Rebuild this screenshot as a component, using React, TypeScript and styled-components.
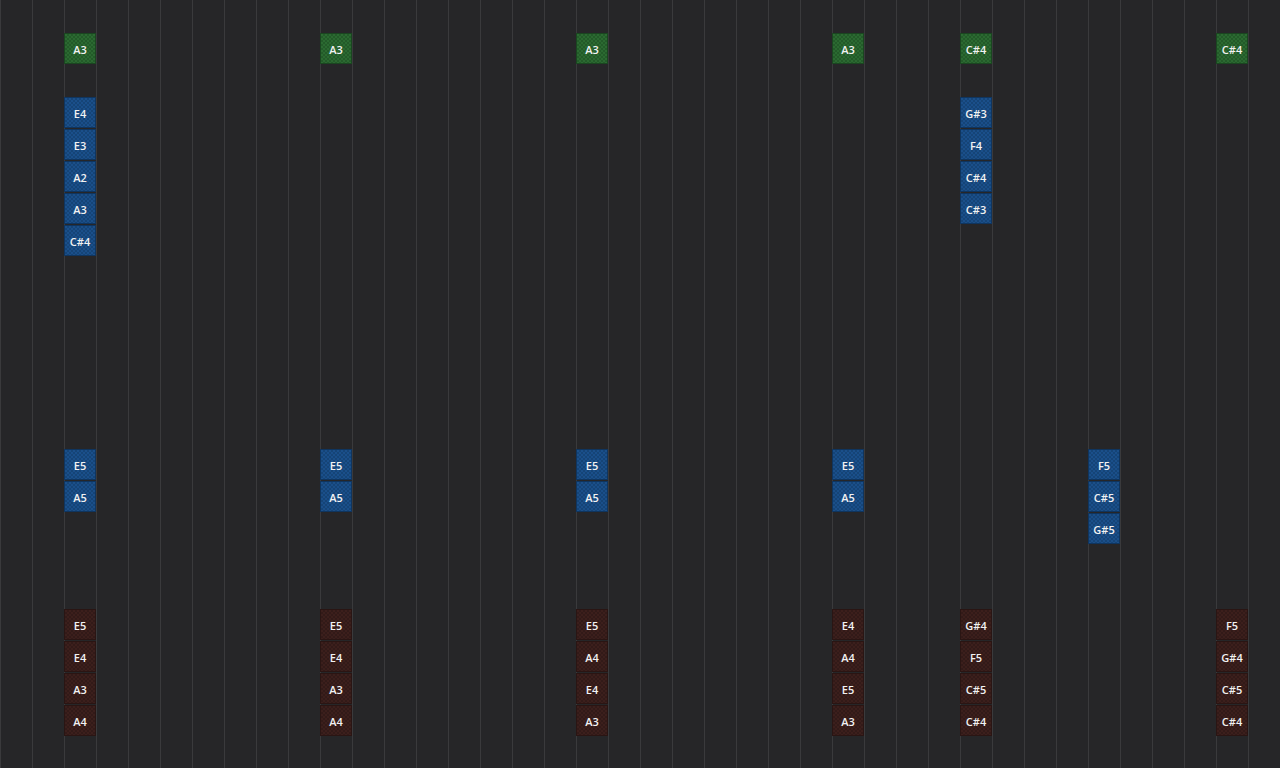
import React from "react";
import styled, { createGlobalStyle } from "styled-components";

const Global = createGlobalStyle`
  html, body { margin: 0; padding: 0; background: #262628; overflow: hidden; }
`;

const Grid = styled.div`
  width: 1280px;
  height: 768px;
  display: grid;
  grid-template-columns: repeat(40, 32px);
  grid-template-rows: repeat(24, 32px);
  background-color: #262628;
  background-image: linear-gradient(to right, #3a3a3c 1px, transparent 1px);
  background-size: 32px 32px;
`;

type Kind = "green" | "blue" | "red";
const colors: Record<Kind, [string, string, string]> = {
  green: ["#2b6a31", "#235a29", "#1a4620"],
  blue: ["#1a4f8a", "#154477", "#0f355f"],
  red: ["#3c1f1c", "#321a18", "#2a1513"],
};

const Note = styled.div<{ $kind: Kind }>`
  margin-top: 1px;
  box-sizing: border-box;
  border: 1px solid ${(p) => colors[p.$kind][2]};
  background-color: ${(p) => colors[p.$kind][0]};
  background-image: repeating-conic-gradient(${(p) => colors[p.$kind][1]} 0 25%, transparent 0 50%);
  background-size: 4px 4px;
  display: flex;
  align-items: center;
  justify-content: center;
  padding-top: 1px;
  color: #f2f2f2;
  font-family: "Open Sans", "Liberation Sans", sans-serif;
  font-weight: 600;
  font-size: 11px;
  height: 31px;
`;

type Col = { c: number; green?: string; blue1?: string[]; blue2?: string[]; red?: string[] };
const cols: Col[] = [
  { c: 3, green: "A3", blue1: ["E4", "E3", "A2", "A3", "C#4"], blue2: ["E5", "A5"], red: ["E5", "E4", "A3", "A4"] },
  { c: 11, green: "A3", blue2: ["E5", "A5"], red: ["E5", "E4", "A3", "A4"] },
  { c: 19, green: "A3", blue2: ["E5", "A5"], red: ["E5", "A4", "E4", "A3"] },
  { c: 27, green: "A3", blue2: ["E5", "A5"], red: ["E4", "A4", "E5", "A3"] },
  { c: 31, green: "C#4", blue1: ["G#3", "F4", "C#4", "C#3"], red: ["G#4", "F5", "C#5", "C#4"] },
  { c: 35, blue2: ["F5", "C#5", "G#5"] },
  { c: 39, green: "C#4", red: ["F5", "G#4", "C#5", "C#4"] },
];

export default function App() {
  const notes: React.ReactNode[] = [];
  cols.forEach((col) => {
    const add = (kind: Kind, row: number, t: string) =>
      notes.push(
        <Note key={`${col.c}-${row}`} $kind={kind} style={{ gridColumn: col.c, gridRow: row }}>
          {t}
        </Note>
      );
    if (col.green) add("green", 2, col.green);
    col.blue1?.forEach((t, i) => add("blue", 4 + i, t));
    col.blue2?.forEach((t, i) => add("blue", 15 + i, t));
    col.red?.forEach((t, i) => add("red", 20 + i, t));
  });
  return (
    <>
      <Global />
      <Grid>{notes}</Grid>
    </>
  );
}
